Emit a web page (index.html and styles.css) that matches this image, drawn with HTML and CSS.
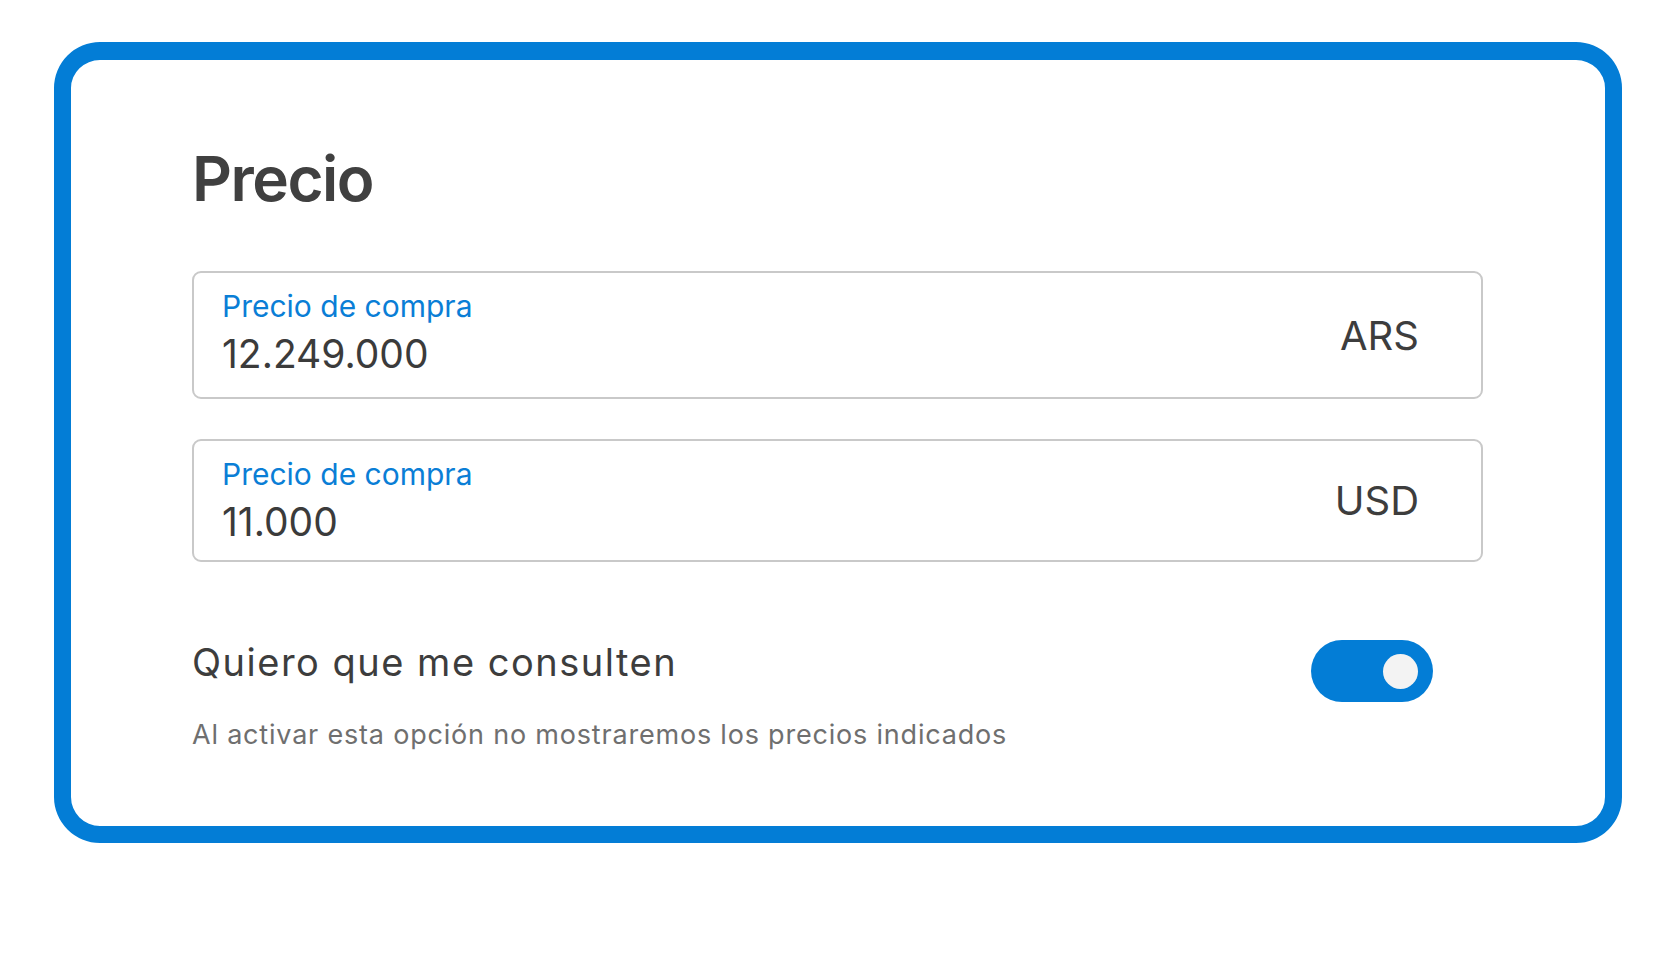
FILE: index.html
```html
<!DOCTYPE html>
<html lang="es">
<head>
    <meta charset="UTF-8">
    <meta name="viewport" content="width=device-width, initial-scale=1.0">
    <title>Precio</title>
    <link rel="stylesheet" href="styles.css">
</head>
<body>

    <div class="card">
        <h1 class="card-title">Precio</h1>

        <!-- Precio en pesos -->
        <div class="field">
            <div class="field-body">
                <label class="field-label" for="precioArs">Precio de compra</label>
                <input class="field-input" type="text" id="precioArs" value="12.249.000">
            </div>
            <span class="field-currency">ARS</span>
        </div>

        <!-- Precio en dolares -->
        <div class="field field--short">
            <div class="field-body">
                <label class="field-label" for="precioUsd">Precio de compra</label>
                <input class="field-input" type="text" id="precioUsd" value="11.000">
            </div>
            <span class="field-currency">USD</span>
        </div>

        <!-- Consultar precio -->
        <div class="option">
            <div class="option-text">
                <p class="option-title">Quiero que me consulten</p>
                <p class="option-help">Al activar esta opción no mostraremos los precios indicados</p>
            </div>
            <button class="toggle" type="button" role="switch" aria-checked="true">
                <span class="toggle-knob"></span>
            </button>
        </div>
    </div>

</body>
</html>
```

FILE: styles.css
```css
/* Reset and base styles */
* {
    box-sizing: border-box;
    margin: 0;
    padding: 0;
}
body {
    font-family: Inter, "Noto Sans", Arial, sans-serif;
    background: #ffffff;
    color: #3d3d3d;
    padding: 42px 52px 0 54px;
}
/* Main card */
.card {
    border: 17px solid #037dd6;
    border-top-width: 18px;
    border-radius: 46px;
    padding: 81px 122px 75px 121px;
    background: #ffffff;
}
.card-title {
    font-size: 62px;
    line-height: 76px;
    font-weight: 600;
    letter-spacing: -1.5px;
    color: #404040;
    margin-bottom: 54px;
}
/* Price fields */
.field {
    display: flex;
    align-items: center;
    border: 2px solid #c9c9c9;
    border-radius: 9px;
    padding: 15px 62px 15px 28px;
}
.field + .field {
    margin-top: 40px;
}
.field-body {
    flex: 1;
    display: flex;
    flex-direction: column;
    gap: 7px;
    padding-bottom: 5px;
}
.field--short .field-body {
    padding-bottom: 0;
}
.field-label {
    font-size: 30px;
    line-height: 36px;
    color: #0a7ed6;
}
.field-input {
    border: none;
    outline: none;
    background: transparent;
    font-family: inherit;
    font-size: 39px;
    line-height: 46px;
    height: 46px;
    color: #3b3b3b;
    width: 100%;
}
.field-currency {
    font-size: 40px;
    color: #3d3d3d;
}
/* Toggle option */
.option {
    display: flex;
    align-items: flex-start;
    justify-content: space-between;
    margin-top: 78px;
}
.option-title {
    font-size: 38px;
    line-height: 44px;
    letter-spacing: 1.5px;
    color: #3d3d3d;
}
.option-help {
    margin-top: 35px;
    font-size: 27px;
    line-height: 32px;
    letter-spacing: 0.8px;
    color: #6f6f6f;
}
.toggle {
    display: flex;
    align-items: center;
    justify-content: flex-end;
    width: 122px;
    height: 62px;
    margin-right: 50px;
    padding-right: 15px;
    border: none;
    border-radius: 31px;
    background-color: #037dd6;
    cursor: pointer;
}
.toggle-knob {
    width: 35px;
    height: 35px;
    border-radius: 50%;
    background-color: #f3f3f3;
}
```
